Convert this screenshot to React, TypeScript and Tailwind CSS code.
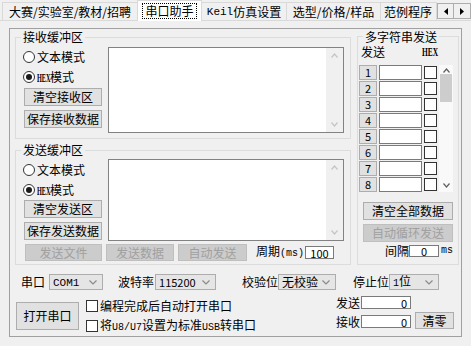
import React from "react";

const mono = "font-['Liberation_Mono',monospace]";

function Btn({
  children,
  className = "",
  disabled = false,
}: {
  children: React.ReactNode;
  className?: string;
  disabled?: boolean;
}) {
  return (
    <div
      className={`flex items-center justify-center border leading-none ${
        disabled
          ? "border-[#bfbfbf] bg-[#cccccc] text-[#a0a0a0]"
          : "border-[#adadad] bg-[#e1e1e1] text-black"
      } ${className}`}
    >
      {children}
    </div>
  );
}

function Radio({ label, checked = false, className = "" }: { label: React.ReactNode; checked?: boolean; className?: string }) {
  return (
    <div className={`flex items-center ${className}`}>
      <span className="flex h-[12px] w-[12px] items-center justify-center rounded-full border border-[#333333] bg-white">
        {checked && <span className="h-[6px] w-[6px] rounded-full bg-[#1a1a1a]" />}
      </span>
      <span className="ml-[2px] flex items-center">{label}</span>
    </div>
  );
}

function Chev({ up = false, color = "#a0a0a0", w = 7 }: { up?: boolean; color?: string; w?: number }) {
  return (
    <svg width={w} height="5" viewBox={`0 0 ${w} 5`} className="block">
      <polyline
        points={up ? `0.5,4.5 ${w / 2},1 ${w - 0.5},4.5` : `0.5,0.5 ${w / 2},4 ${w - 0.5},0.5`}
        fill="none"
        stroke={color}
        strokeWidth="1.2"
      />
    </svg>
  );
}

function TextArea({ className = "" }: { className?: string }) {
  return (
    <div className={`flex justify-end border border-[#828282] bg-white ${className}`}>
      <div className="flex w-[17px] flex-col items-center justify-between bg-[#f0f0f0] py-[5px]">
        <Chev up color="#c4c4c4" />
        <Chev color="#c4c4c4" />
      </div>
    </div>
  );
}

function Combo({ children, className = "" }: { children: React.ReactNode; className?: string }) {
  return (
    <div className={`flex h-[16px] items-center justify-between border border-[#adadad] bg-[#e5e5e5] pl-[3px] pr-[5px] ${className}`}>
      <span>{children}</span>
      <Chev color="#8a8a8a" w={8} />
    </div>
  );
}

// condensed bold "HEX", like the bitmap font of the original
function HexText({ wide = false }: { wide?: boolean }) {
  return (
    <span className={`inline-block overflow-visible whitespace-nowrap ${wide ? "w-[16px]" : "w-[13px]"}`}>
      <span
        className={`inline-block origin-left font-['Liberation_Serif',serif] text-[12px] font-bold ${
          wide ? "scale-x-[0.62]" : "scale-x-[0.52]"
        }`}
      >
        HEX
      </span>
    </span>
  );
}

function Tab({ children, className = "" }: { children: React.ReactNode; className?: string }) {
  return (
    <div className={`flex h-[18px] items-center justify-center border-r border-t border-[#d9d9d9] bg-[#f0f0f0] ${className}`}>
      {children}
    </div>
  );
}

export default function App() {
  const rows = [1, 2, 3, 4, 5, 6, 7, 8];
  return (
    <div className="h-[346px] w-[471px] overflow-hidden bg-[#f0f0f0] font-['Noto_Sans_CJK_SC',sans-serif] text-[12px] leading-[14px] text-black">
      {/* tab strip */}
      <div className="flex h-[20px] items-end pl-[2px]">
        <Tab className="w-[136px] border-l">大赛/实验室/教材/招聘</Tab>
        <div className="relative z-10 -mb-px -ml-px flex h-[21px] w-[65px] items-center justify-center border-l border-r border-t border-[#d9d9d9] bg-white">
          <span className="border border-dotted border-black px-[2px] leading-[14px]">串口助手</span>
        </div>
        <Tab className="w-[85px]">
          <span className={`${mono} text-[11px]`}>Keil</span>仿真设置
        </Tab>
        <Tab className="w-[94px]">选型/价格/样品</Tab>
        <Tab className="w-[56px] justify-start pl-[3px]">范例程序</Tab>
        <div className="mb-[1px] flex h-[16px]">
          <div className="flex w-[17px] items-center justify-center border border-[#adadad] bg-[#f0f0f0]">
            <svg width="4" height="7" viewBox="0 0 4 7">
              <polygon points="4,0 0,3.5 4,7" fill="#000" />
            </svg>
          </div>
          <div className="flex w-[17px] items-center justify-center border border-l-0 border-[#adadad] bg-[#f0f0f0]">
            <svg width="4" height="7" viewBox="0 0 4 7">
              <polygon points="0,0 4,3.5 0,7" fill="#000" />
            </svg>
          </div>
        </div>
      </div>

      {/* tab page */}
      <div className="border-t border-[#d9d9d9] pt-[7px]">
        <div className="ml-[9px] h-[309px] w-[453px] border border-[#a0a0a0]">
          <div className="flex pl-[5px] pt-[1px]">
            {/* left column */}
            <div className="w-[336px]">
              <fieldset className="h-[109px] w-[336px] border border-[#dcdcdc] pl-[7px] pt-[3px]">
                <legend className="-ml-[2px] px-[2px] leading-[14px]">接收缓冲区</legend>
                <div className="flex">
                  <div className="flex w-[79px] flex-col">
                    <Radio label="文本模式" className="h-[19px]" />
                    <Radio label={<><HexText />模式</>} checked className="h-[22px]" />
                    <Btn className="ml-[1px] h-[18px] w-[78px]">清空接收区</Btn>
                    <Btn className="ml-[1px] mt-[4px] h-[18px] w-[78px]">保存接收数据</Btn>
                  </div>
                  <TextArea className="ml-[6px] h-[86px] w-[236px]" />
                </div>
              </fieldset>

              <fieldset className="mt-[4px] h-[122px] w-[336px] border border-[#dcdcdc] pl-[7px] pt-[2px]">
                <legend className="-ml-[2px] px-[2px] leading-[14px]">发送缓冲区</legend>
                <div className="flex">
                  <div className="flex w-[79px] flex-col">
                    <Radio label="文本模式" className="h-[21px]" />
                    <Radio label={<><HexText />模式</>} checked className="h-[20px]" />
                    <Btn className="ml-[1px] h-[18px] w-[78px]">清空发送区</Btn>
                    <Btn className="ml-[1px] mt-[4px] h-[18px] w-[78px]">保存发送数据</Btn>
                  </div>
                  <TextArea className="ml-[6px] h-[82px] w-[236px]" />
                </div>
                <div className="mt-[3px] flex items-center">
                  <Btn disabled className="ml-[2px] h-[17px] w-[77px]">发送文件</Btn>
                  <Btn disabled className="ml-[4px] h-[17px] w-[68px]">发送数据</Btn>
                  <Btn disabled className="ml-[4px] h-[17px] w-[69px]">自动发送</Btn>
                  <span className="ml-[9px]">
                    周期<span className={`${mono} text-[10px]`}>(ms)</span>
                  </span>
                  <div className="ml-[1px] flex h-[13px] w-[29px] items-center justify-center border border-[#7a7a7a] bg-white text-[11px]">
                    100
                  </div>
                </div>
              </fieldset>
            </div>

            {/* right column */}
            <fieldset className="ml-[6px] h-[235px] w-[102px] border border-[#dcdcdc] pl-[1px]">
              <legend className="ml-[4px] px-[2px] leading-[13px]">多字符串发送</legend>
              <div className="mt-[2px] flex h-[13px] items-center">
                <span className="ml-[2px]">发送</span>
                <span className="ml-[37px] flex items-center">
                  <HexText wide />
                </span>
              </div>
              <div className="mt-[7px] flex">
                <div className="flex flex-col gap-[1px]">
                  {rows.map((n) => (
                    <div key={n} className="flex h-[15px] items-center">
                      <Btn className="h-[15px] w-[18px] text-[11px]">{n}</Btn>
                      <div className="ml-[2px] h-[15px] w-[43px] border border-[#7a7a7a] bg-white" />
                      <span className="ml-[2px] block h-[13px] w-[13px] border border-[#333333] bg-white" />
                    </div>
                  ))}
                </div>
                <div className="ml-[2px] flex h-[127px] w-[14px] flex-col items-center bg-[#f9f9f9] pt-[3px]">
                  <Chev up color="#606060" />
                  <div className="mt-[1px] h-[28px] w-[12px] bg-[#cdcdcd]" />
                  <div className="flex-1" />
                  <div className="pb-[4px]">
                    <Chev color="#606060" />
                  </div>
                </div>
              </div>
              <Btn className="ml-[4px] mt-[10px] h-[18px] w-[90px]">清空全部数据</Btn>
              <Btn disabled className="ml-[4px] mt-[4px] h-[18px] w-[90px]">自动循环发送</Btn>
              <div className="mt-[3px] flex h-[12px] items-center">
                <span className="ml-[26px]">间隔</span>
                <div className="flex h-[12px] w-[30px] items-center justify-center border border-[#7a7a7a] bg-white text-[11px]">
                  0
                </div>
                <span className={`${mono} ml-[2px] text-[10px]`}>ms</span>
              </div>
            </fieldset>
          </div>

          {/* serial settings */}
          <div className="mt-[9px] flex h-[16px] items-center">
            <span className="ml-[11px]">串口</span>
            <Combo className="ml-[4px] w-[54px]">
              <span className={`${mono} text-[11px]`}>COM1</span>
            </Combo>
            <span className="ml-[15px]">波特率</span>
            <Combo className="ml-[1px] w-[61px] text-[11px]">115200</Combo>
            <span className="ml-[26px]">校验位</span>
            <Combo className="w-[58px]">无校验</Combo>
            <span className="ml-[17px]">停止位</span>
            <Combo className="w-[50px]">
              <span className={`${mono} text-[10px]`}>1</span>位
            </Combo>
          </div>

          <div className="mt-[6px] flex items-start">
            <Btn className="ml-[6px] mt-[6px] h-[28px] w-[63px]">打开串口</Btn>
            <div className="ml-[7px] w-[250px]">
              <div className="flex h-[20px] items-center">
                <span className="block h-[12px] w-[12px] border border-[#333333] bg-white" />
                <span className="ml-[2px]">编程完成后自动打开串口</span>
              </div>
              <div className="flex h-[20px] items-center">
                <span className="block h-[12px] w-[12px] border border-[#333333] bg-white" />
                <span className="ml-[2px]">
                  将<span className={`${mono} text-[10px]`}>U8/U7</span>设置为标准
                  <span className={`${mono} text-[10px]`}>USB</span>转串口
                </span>
              </div>
            </div>
            <div className="flex flex-col">
              <div className="flex h-[13px] items-center">
                <span className="w-[25px]">发送</span>
                <div className="flex h-[13px] w-[50px] items-center justify-end border border-[#7a7a7a] bg-white pr-[3px] text-[11px]">
                  0
                </div>
              </div>
              <div className="mt-[6px] flex h-[13px] items-center">
                <span className="w-[25px]">接收</span>
                <div className="flex h-[13px] w-[50px] items-center justify-end border border-[#7a7a7a] bg-white pr-[3px] text-[11px]">
                  0
                </div>
              </div>
            </div>
            <Btn className="ml-[4px] mt-[16px] h-[17px] w-[39px]">清零</Btn>
          </div>
        </div>
      </div>
    </div>
  );
}
